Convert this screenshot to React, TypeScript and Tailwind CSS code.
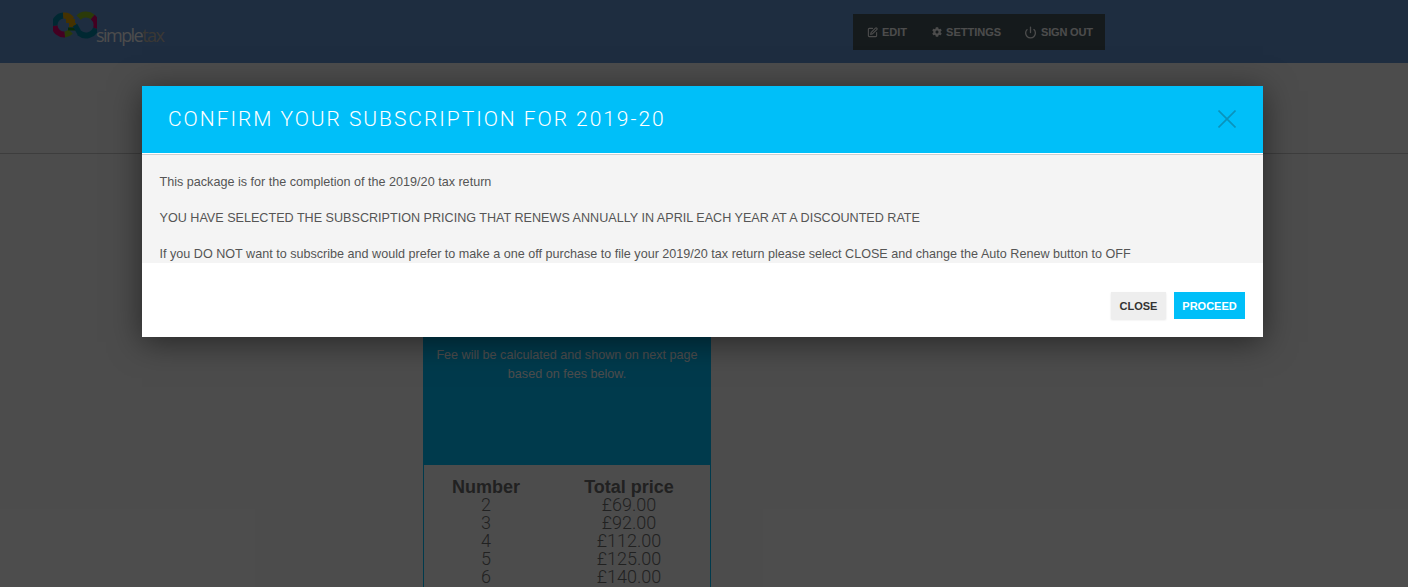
import { SquarePen, Power } from "lucide-react";
import { FaCog } from "react-icons/fa";

const rows = [
  ["2", "£69.00"],
  ["3", "£92.00"],
  ["4", "£112.00"],
  ["5", "£125.00"],
  ["6", "£140.00"],
];

function arc(cx: number, cy: number, r: number, a0: number, a1: number) {
  const p = (a: number) => {
    const t = (a * Math.PI) / 180;
    return `${(cx + r * Math.cos(t)).toFixed(2)} ${(cy + r * Math.sin(t)).toFixed(2)}`;
  };
  return `M${p(a0)} A${r} ${r} 0 ${Math.abs(a1 - a0) > 180 ? 1 : 0} 1 ${p(a1)}`;
}

function Logo() {
  return (
    <div className="flex w-[112px] items-start pt-[11px]">
      <svg width="44" height="29" viewBox="0 0 44 29" fill="none" strokeWidth="6" className="shrink-0">
        <path d={arc(11, 14, 9.5, 175, 265)} stroke="#0088a8" />
        <path d={arc(11, 14, 9.5, 265, 325)} stroke="#e8a800" />
        <path d={arc(11, 14, 9.5, 85, 175)} stroke="#e0006f" />
        <path d={arc(11, 14, 9.5, 45, 85)} stroke="#8fc31f" />
        <path d={arc(33, 14, 10.5, 225, 310)} stroke="#8fc31f" />
        <path d={arc(33, 14, 10.5, 310, 380)} stroke="#e0006f" />
        <path d={arc(33, 14, 10.5, 20, 130)} stroke="#0088a8" />
        <path d="M13 10 L22 10" stroke="#e8a800" strokeWidth="4" />
        <path d="M16 14 L23 14" stroke="#e8a800" strokeWidth="4" />
        <path d="M15 18 L23 18" stroke="#1f8a1f" strokeWidth="3" />
        <path d="M27 23 L22 14" stroke="#0088a8" strokeWidth="5" />
      </svg>
      <div className="ml-[-1px] mt-[12px] font-['Open_Sans',sans-serif] text-[18px] leading-[24px] tracking-[-1.55px] text-white">
        simple<span className="text-[#c4bcb0]">tax</span>
      </div>
    </div>
  );
}

export default function App() {
  return (
    <div className="relative h-[587px] overflow-hidden bg-white font-['Liberation_Sans',Arial,sans-serif]">
      <header className="flex h-[63px] bg-[#6496d5]">
        <div className="ml-[53px]">
          <Logo />
        </div>
        <nav className="ml-[688px] mt-[14px] flex h-[36px] w-[252px] items-center bg-[#46575e] pl-[14px] text-[11px] font-bold text-white">
          <span className="flex items-center gap-[4px]">
            <SquarePen size={11} strokeWidth={2.4} />
            EDIT
          </span>
          <span className="ml-[25px] flex items-center gap-[4px]">
            <FaCog size={10} />
            SETTINGS
          </span>
          <span className="ml-[23px] flex items-center gap-[4px] tracking-[-0.2px]">
            <Power size={13} strokeWidth={2.4} />
            SIGN OUT
          </span>
        </nav>
      </header>
      <div className="h-[91px] border-b border-[#cccccc]" />
      <main className="ml-[423px] mt-[176px] w-[288px] border border-t-0 border-[#00c1ff] pb-[40px]">
        <div className="h-[135px] bg-[#00c1ff] px-[8px] pt-[16px] text-center text-[12.6px] leading-[18.9px] text-white">
          <p>Fee will be calculated and shown on next page</p>
          <p>based on fees below.</p>
        </div>
        <table className="ml-[3px] mt-[13px] w-[286px] text-center text-[18px] leading-[18px] text-[#6f6f6f]">
          <thead>
            <tr className="font-bold">
              <th className="w-[118px]">Number</th>
              <th>Total price</th>
            </tr>
          </thead>
          <tbody className="font-['Roboto',sans-serif] font-light">
            {rows.map(([n, p]) => (
              <tr key={n}>
                <td>{n}</td>
                <td>{p}</td>
              </tr>
            ))}
          </tbody>
        </table>
      </main>

      <div className="absolute inset-0 bg-black/70" />

      <div className="absolute left-[142px] top-[86px] w-[1121px] bg-white shadow-[0_5px_30px_rgba(0,0,0,0.5)]">
        <div className="flex h-[68px] items-center justify-between border-b border-white bg-[#00bff9] pl-[26px] pr-[27px] text-white">
          <h2 className="mb-[2px] font-['Roboto',sans-serif] text-[21px] font-light leading-[28px] tracking-[1.95px]">
            CONFIRM YOUR SUBSCRIPTION FOR 2019-20
          </h2>
          <svg width="18" height="18" viewBox="0 0 18 18" className="mb-[2px] text-[#0a93bc]" stroke="currentColor" strokeWidth="1.6">
            <path d="M0.5 0.5 L17.5 17.5 M17.5 0.5 L0.5 17.5" />
          </svg>
        </div>
        <div className="h-[109px] border-t border-[#cfcfcf] bg-[#f4f4f4] pl-[17.5px] pr-[18px] pt-[18px] text-[12.6px] leading-[18.9px] text-[#555555]">
          <p className="mb-[17.1px]">This package is for the completion of the 2019/20 tax return</p>
          <p className="mb-[17.1px]">YOU HAVE SELECTED THE SUBSCRIPTION PRICING THAT RENEWS ANNUALLY IN APRIL EACH YEAR AT A DISCOUNTED RATE</p>
          <p>If you DO NOT want to subscribe and would prefer to make a one off purchase to file your 2019/20 tax return please select CLOSE and change the Auto Renew button to OFF</p>
        </div>
        <div className="flex h-[74px] items-start justify-end gap-[8px] pr-[18px] pt-[29px] text-[11px] font-bold">
          <button className="h-[27px] w-[55px] bg-[#eeeeee] pt-[1px] text-[#333333] shadow-[0_1px_2px_rgba(0,0,0,0.1)]">CLOSE</button>
          <button className="h-[27px] w-[71px] bg-[#00bff9] pt-[1px] text-white">PROCEED</button>
        </div>
      </div>
    </div>
  );
}
